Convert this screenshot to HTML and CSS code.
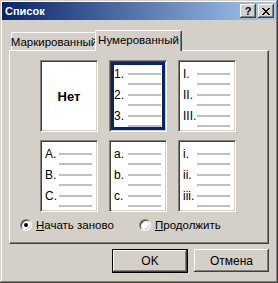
FILE: index.html
```html
<!DOCTYPE html>
<html lang="ru">
<head>
  <meta charset="UTF-8">
  <title>Список</title>
  <link rel="stylesheet" href="styles.css">
</head>
<body>
  <div class="window">
    <div class="titlebar">
      <span class="title">Список</span>
      <div class="title-buttons">
        <button class="cap-btn help">?</button>
        <button class="cap-btn close">
          <svg width="8" height="7" viewBox="0 0 8 7">
            <path d="M0 0h2v1h-2zM6 0h2v1h-2zM1 1h2v1h-2zM5 1h2v1h-2zM2 2h4v1h-4zM3 3h2v1h-2zM2 4h4v1h-4zM1 5h2v1h-2zM5 5h2v1h-2zM0 6h2v1h-2zM6 6h2v1h-2z" fill="#000"/>
          </svg>
        </button>
      </div>
    </div>

    <div class="content">
      <div class="tabs">
        <div class="tab">Маркированный</div>
        <div class="tab active">Нумерованный</div>
      </div>

      <div class="panel">
        <div class="gallery">
          <div class="sample none">Нет</div>

          <div class="sample selected">
            <div class="entry"><div class="ln"><span class="num">1.</span><span class="bar"></span></div><div class="ln"><span class="bar"></span></div></div>
            <div class="entry"><div class="ln"><span class="num">2.</span><span class="bar"></span></div><div class="ln"><span class="bar"></span></div></div>
            <div class="entry"><div class="ln"><span class="num">3.</span><span class="bar"></span></div><div class="ln"><span class="bar"></span></div></div>
          </div>

          <div class="sample">
            <div class="entry"><div class="ln"><span class="num">I.</span><span class="bar"></span></div><div class="ln"><span class="bar"></span></div></div>
            <div class="entry"><div class="ln"><span class="num">II.</span><span class="bar"></span></div><div class="ln"><span class="bar"></span></div></div>
            <div class="entry"><div class="ln"><span class="num">III.</span><span class="bar"></span></div><div class="ln"><span class="bar"></span></div></div>
          </div>

          <div class="sample">
            <div class="entry"><div class="ln"><span class="num">A.</span><span class="bar"></span></div><div class="ln"><span class="bar"></span></div></div>
            <div class="entry"><div class="ln"><span class="num">B.</span><span class="bar"></span></div><div class="ln"><span class="bar"></span></div></div>
            <div class="entry"><div class="ln"><span class="num">C.</span><span class="bar"></span></div><div class="ln"><span class="bar"></span></div></div>
          </div>

          <div class="sample">
            <div class="entry"><div class="ln"><span class="num">a.</span><span class="bar"></span></div><div class="ln"><span class="bar"></span></div></div>
            <div class="entry"><div class="ln"><span class="num">b.</span><span class="bar"></span></div><div class="ln"><span class="bar"></span></div></div>
            <div class="entry"><div class="ln"><span class="num">c.</span><span class="bar"></span></div><div class="ln"><span class="bar"></span></div></div>
          </div>

          <div class="sample">
            <div class="entry"><div class="ln"><span class="num">i.</span><span class="bar"></span></div><div class="ln"><span class="bar"></span></div></div>
            <div class="entry"><div class="ln"><span class="num">ii.</span><span class="bar"></span></div><div class="ln"><span class="bar"></span></div></div>
            <div class="entry"><div class="ln"><span class="num">iii.</span><span class="bar"></span></div><div class="ln"><span class="bar"></span></div></div>
          </div>
        </div>

        <div class="radios">
          <label class="radio-item first">
            <span class="radio checked"><span class="dot"></span></span>
            <span><u>Н</u>ачать заново</span>
          </label>
          <label class="radio-item">
            <span class="radio"></span>
            <span><u>П</u>родолжить</span>
          </label>
        </div>
      </div>

      <div class="actions">
        <button class="btn default">OK</button>
        <button class="btn">Отмена</button>
      </div>
    </div>
  </div>
</body>
</html>
```

FILE: styles.css
```css
* {
  box-sizing: border-box;
}

body {
  margin: 0;
  background-color: #d4d0c8;
  font-family: "Liberation Sans", Arial, sans-serif;
  font-size: 12px;
  color: #000;
}

.window {
  width: 278px;
  height: 283px;
  padding: 2px;
  background-color: #d4d0c8;
  box-shadow: inset -1px -1px #404040, inset 1px 1px #d4d0c8,
              inset -2px -2px #808080, inset 2px 2px #fff;
}

.titlebar {
  height: 18px;
  display: flex;
  align-items: center;
  padding: 0 2px 0 3px;
  background: linear-gradient(to right, #0a246a, #a6caf0);
}

.title {
  flex: 1;
  color: #fff;
  font-size: 11px;
  font-weight: bold;
}

.title-buttons {
  display: flex;
  gap: 2px;
}

.cap-btn {
  width: 16px;
  height: 14px;
  padding: 0;
  border: 0;
  display: flex;
  align-items: center;
  justify-content: center;
  background-color: #d4d0c8;
  font-family: "Liberation Sans", Arial, sans-serif;
  font-size: 11px;
  font-weight: bold;
  color: #000;
  box-shadow: inset -1px -1px #404040, inset 1px 1px #fff,
              inset -2px -2px #808080, inset 2px 2px #d4d0c8;
}

.content {
  padding: 10px 0 0 7px;
}

/* tabs */
.tabs {
  position: relative;
  z-index: 1;
  display: flex;
  align-items: flex-end;
  height: 21px;
  margin-bottom: -1px;
  padding-left: 2px;
  font-size: 11.5px;
}

.tab {
  width: 86px;
  height: 18px;
  margin-bottom: 1px;
  margin-right: -2px;
  display: flex;
  align-items: center;
  justify-content: center;
  white-space: nowrap;
  border-left: 1px solid #fff;
  border-top: 1px solid #fff;
  border-right: 1px solid #404040;
  border-radius: 2px 2px 0 0;
  box-shadow: inset -1px 0 #808080;
  background-color: #d4d0c8;
}

.tab.active {
  width: 87px;
  height: 21px;
  margin-bottom: 0;
  padding-bottom: 2px;
}

.panel {
  width: 260px;
  height: 194px;
  padding: 9px 0 0 10px;
  border-top: 1px solid #fff;
  border-left: 1px solid #fff;
  border-right: 1px solid #404040;
  border-bottom: 1px solid #404040;
  box-shadow: inset -1px -1px #808080;
}

.gallery {
  margin-left: 20px;
  display: grid;
  grid-template-columns: repeat(3, 58px);
  grid-template-rows: 72px 72px;
  column-gap: 11px;
  row-gap: 8px;
}

.sample {
  background-color: #fff;
  border: 1px solid;
  border-color: #808080 #fff #fff #808080;
  box-shadow: inset 1px 1px #404040, inset -1px -1px #d4d0c8;
  padding: 8px 5px 0 4px;
}

.sample.selected {
  box-shadow: inset 1px 1px #404040, inset -1px -1px #d4d0c8,
              inset 0 0 0 4px #0a246a;
}

.sample.none {
  display: flex;
  align-items: center;
  justify-content: center;
  padding: 0;
  font-size: 13px;
  font-weight: bold;
}

.entry {
  margin-bottom: 1px;
}

.ln {
  height: 10px;
  display: flex;
  align-items: center;
}

.num {
  line-height: 10px;
}

.bar {
  width: 33px;
  height: 2px;
  margin-left: auto;
  background-color: #c0c0c0;
}

/* radios */
.radios {
  display: flex;
  align-items: center;
  margin-top: 6px;
  height: 13px;
  font-size: 11.5px;
}

.radio-item {
  display: flex;
  align-items: center;
  gap: 4px;
}

.radio-item.first {
  width: 119px;
}

.radio {
  width: 12px;
  height: 12px;
  border-radius: 50%;
  border: 1px solid;
  border-color: #808080 #fff #fff #808080;
  background-color: #fff;
  box-shadow: inset 1px 1px #404040, inset -1px -1px #d4d0c8;
  display: flex;
  align-items: center;
  justify-content: center;
}

.dot {
  width: 4px;
  height: 4px;
  border-radius: 50%;
  background-color: #000;
}

/* buttons */
.actions {
  width: 260px;
  margin-top: 5px;
  display: flex;
  justify-content: flex-end;
  gap: 6px;
}

.btn {
  width: 75px;
  height: 23px;
  padding: 0;
  border: 0;
  background-color: #d4d0c8;
  font-family: "Liberation Sans", Arial, sans-serif;
  font-size: 12px;
  color: #000;
  box-shadow: inset -1px -1px #404040, inset 1px 1px #fff,
              inset -2px -2px #808080, inset 2px 2px #d4d0c8;
}

.btn.default {
  border: 1px solid #000;
  width: 76px;
  height: 24px;
}
```
